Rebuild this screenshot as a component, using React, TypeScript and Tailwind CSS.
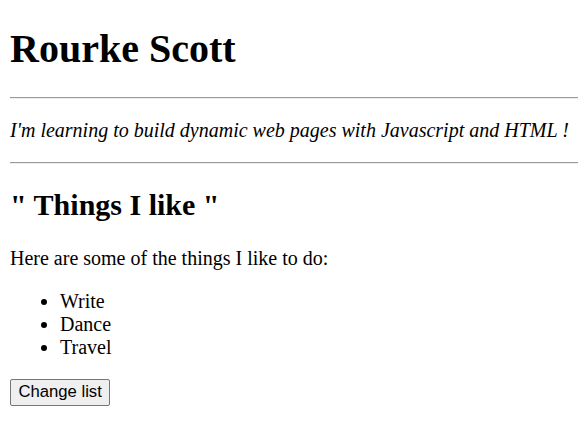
export default function App() {
  return (
    <div className="mb-[10px] ml-[10px] mr-0 mt-[10px] font-['Liberation_Serif',serif] text-[20px] text-black">
      <h1 className="mb-[24.8px] mt-[24.8px] text-[40px] font-bold leading-[normal]">Rourke Scott</h1>
      <hr className="my-[10px] border-t border-b border-t-[#9a9a9a] border-b-[#eeeeee]" />
      <p className="my-5 whitespace-nowrap italic leading-[normal]">I'm learning to build dynamic web pages with Javascript and HTML !</p>
      <hr className="my-[10px] border-t border-b border-t-[#9a9a9a] border-b-[#eeeeee]" />
      <h2 className="my-[24.9px] text-[30px] font-bold leading-[normal]">" Things I like "</h2>
      <p className="my-5 leading-[normal]">Here are some of the things I like to do:</p>
      <ul className="mb-4 mt-5 list-disc pl-[50px] leading-[normal]">
        <li>Write</li>
        <li>Dance</li>
        <li>Travel</li>
      </ul>
      <button className="rounded-[2px] border border-[#767676] bg-[#efefef] px-[7.5px] py-[2.5px] font-['Liberation_Sans',sans-serif] text-[16.667px] leading-[normal] text-black">
        Change list
      </button>
    </div>
  );
}
